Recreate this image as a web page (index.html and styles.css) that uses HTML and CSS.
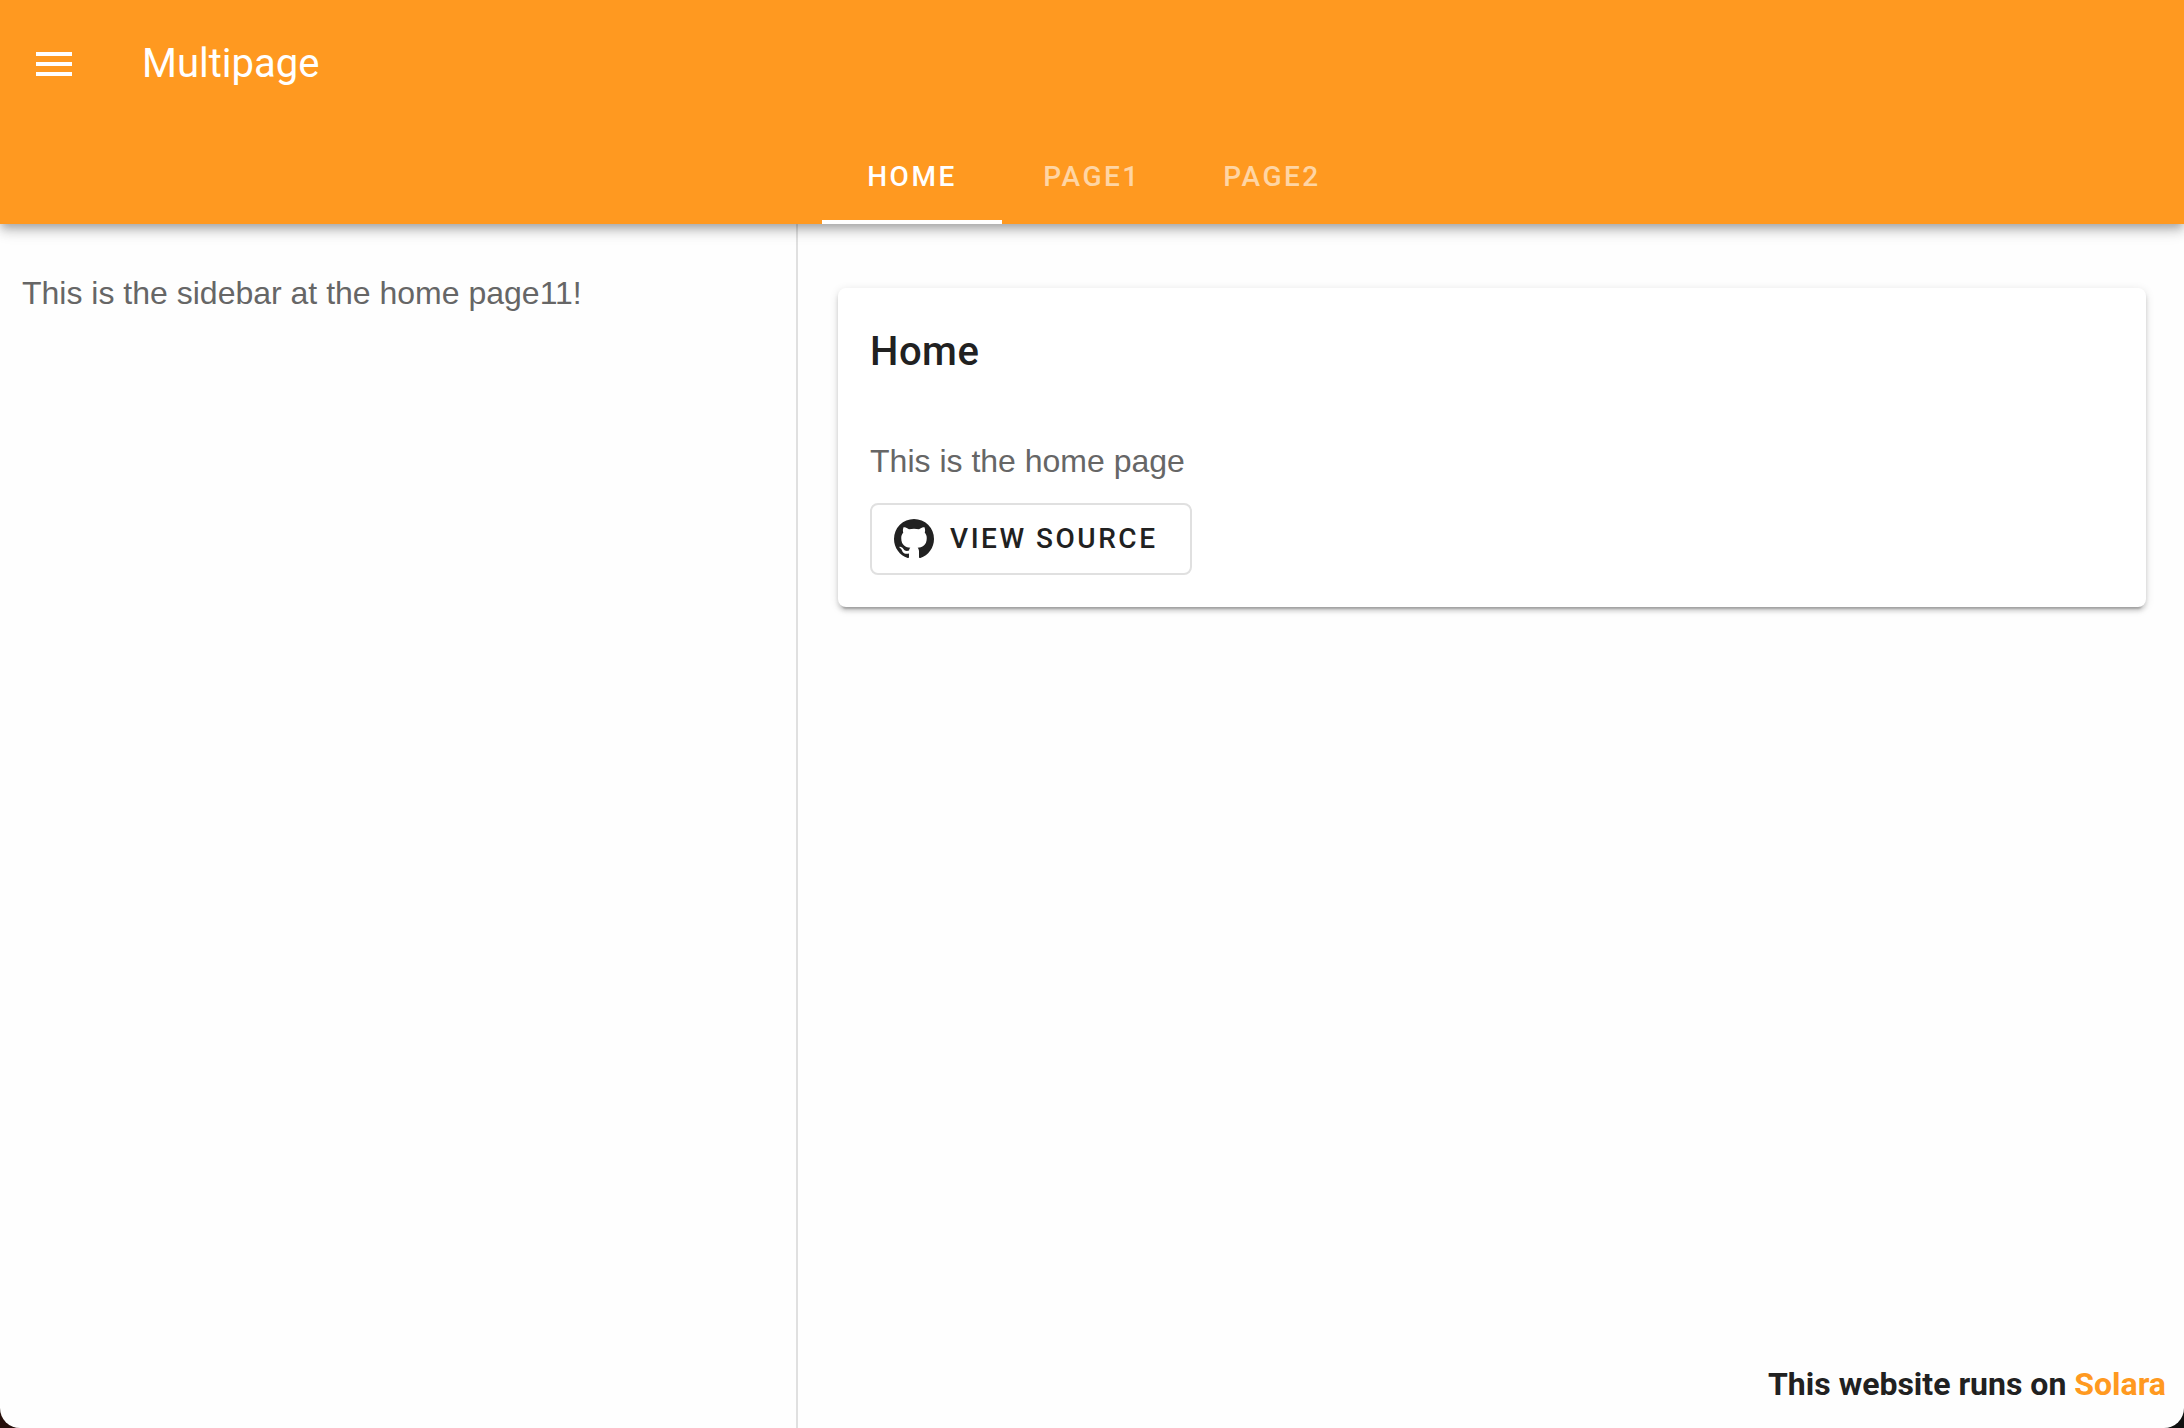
FILE: index.html
```html
<!DOCTYPE html>
<html lang="en">
<head>
  <meta charset="utf-8">
  <meta name="viewport" content="width=device-width, initial-scale=1">
  <title>Multipage</title>
  <link rel="stylesheet" href="styles.css">
</head>
<body>
  <div class="app">
    <header class="app-bar">
      <div class="toolbar">
        <button class="menu-button" type="button" aria-label="Toggle menu">
          <svg class="icon" viewBox="0 0 24 24" aria-hidden="true"><path d="M3 6h18v2H3V6m0 5h18v2H3v-2m0 5h18v2H3v-2Z"/></svg>
        </button>
        <h1 class="app-title">Multipage</h1>
      </div>
      <nav class="tabs">
        <a class="tab tab-active" href="#home" aria-current="page">Home</a>
        <a class="tab" href="#page1">Page1</a>
        <a class="tab" href="#page2">Page2</a>
      </nav>
    </header>
    <div class="layout">
      <aside class="sidebar">
        <p class="text">This is the sidebar at the home page11!</p>
      </aside>
      <main class="content">
        <section class="card">
          <h2 class="card-title">Home</h2>
          <div class="card-body">
            <p class="text">This is the home page</p>
            <button class="source-button" type="button">
              <svg class="icon" viewBox="0 0 24 24" aria-hidden="true"><path d="M12 2A10 10 0 0 0 2 12c0 4.42 2.87 8.17 6.84 9.5.5.08.66-.23.66-.5v-1.69c-2.77.6-3.36-1.34-3.36-1.34-.46-1.16-1.11-1.47-1.11-1.47-.91-.62.07-.6.07-.6 1 .07 1.53 1.03 1.53 1.03.87 1.52 2.34 1.07 2.91.83.09-.65.35-1.09.63-1.34-2.22-.25-4.55-1.11-4.55-4.92 0-1.11.38-2 1.03-2.71-.1-.25-.45-1.29.1-2.64 0 0 .84-.27 2.75 1.02.79-.22 1.65-.33 2.5-.33.85 0 1.71.11 2.5.33 1.91-1.29 2.75-1.02 2.75-1.02.55 1.35.2 2.39.1 2.64.65.71 1.03 1.6 1.03 2.71 0 3.82-2.34 4.66-4.57 4.91.36.31.69.92.69 1.85V21c0 .27.16.59.67.5C19.14 20.16 22 16.42 22 12A10 10 0 0 0 12 2Z"/></svg>
              <span>View source</span>
            </button>
          </div>
        </section>
        <footer class="footer">This website runs on <a href="#solara">Solara</a></footer>
      </main>
    </div>
  </div>
</body>
</html>
```
FILE: styles.css
```css
:root {
  --primary: #ff9920;
  --ink: #212121;
  --muted: #666;
  --line: #e0e0e0;
}

* {
  box-sizing: border-box;
}

body {
  margin: 0;
  background: linear-gradient(90deg, #260f0b, #101010);
  color: var(--ink);
  font-family: Roboto, sans-serif;
  font-size: 32px;
  line-height: 48px;
}

h1, h2, p {
  margin: 0;
}

a {
  color: var(--primary);
  text-decoration: none;
}

button {
  font: inherit;
  cursor: pointer;
}

.app {
  display: flex;
  flex-direction: column;
  min-height: 100vh;
  background: #fefefe;
  border-radius: 0 0 20px 20px;
  overflow: hidden;
}

.app-bar {
  position: relative;
  z-index: 1;
  background: var(--primary);
  color: #fff;
  box-shadow: 0 4px 8px -2px rgba(0, 0, 0, .2),
              0 8px 10px rgba(0, 0, 0, .14),
              0 2px 20px rgba(0, 0, 0, .12);
}

.toolbar {
  display: flex;
  align-items: center;
  gap: 40px;
  height: 128px;
  padding: 0 6px;
}

.menu-button {
  display: grid;
  place-items: center;
  width: 96px;
  height: 96px;
  padding: 0;
  border: 0;
  border-radius: 50%;
  background: none;
  color: inherit;
}

.icon {
  display: block;
  width: 48px;
  height: 48px;
  fill: currentColor;
}

.app-title {
  font-size: 40px;
  font-weight: 400;
}

.tabs {
  display: flex;
  justify-content: center;
}

.tab {
  display: flex;
  align-items: center;
  justify-content: center;
  min-width: 180px;
  height: 96px;
  padding: 6px 32px 0;
  border-bottom: 4px solid transparent;
  color: rgba(255, 255, 255, .6);
  font-size: 28px;
  font-weight: 500;
  letter-spacing: .09em;
  text-transform: uppercase;
}

.tab-active {
  border-bottom-color: #fff;
  color: #fff;
}

.layout {
  display: flex;
  flex: 1;
}

.sidebar {
  flex: 0 0 36.54%;
  padding: 45px 22px;
  border-right: 2px solid var(--line);
}

.text {
  color: var(--muted);
  font-family: "Liberation Sans", Arial, sans-serif;
}

.content {
  display: flex;
  flex: 1;
  flex-direction: column;
  min-width: 0;
}

.card {
  margin: 64px 38px 64px 40px;
  border-radius: 8px;
  background: #fff;
  box-shadow: 0 6px 2px -4px rgba(0, 0, 0, .2),
              0 4px 4px rgba(0, 0, 0, .14),
              0 2px 10px rgba(0, 0, 0, .12);
}

.card-title {
  padding: 32px;
  font-size: 40px;
  font-weight: 500;
  line-height: 64px;
  letter-spacing: .0125em;
}

.card-body {
  display: flex;
  flex-direction: column;
  align-items: flex-start;
  gap: 18px;
  padding: 21px 32px 32px;
}

.source-button {
  display: flex;
  align-items: center;
  gap: 12px;
  height: 72px;
  padding: 0 33px 0 18px;
  border: 2px solid var(--line);
  border-radius: 8px;
  background: none;
  color: var(--ink);
  font-size: 28px;
  font-weight: 500;
  letter-spacing: .09em;
  text-transform: uppercase;
}

.footer {
  margin-top: auto;
  padding: 20px 18px;
  font-weight: 700;
  text-align: right;
}
```
